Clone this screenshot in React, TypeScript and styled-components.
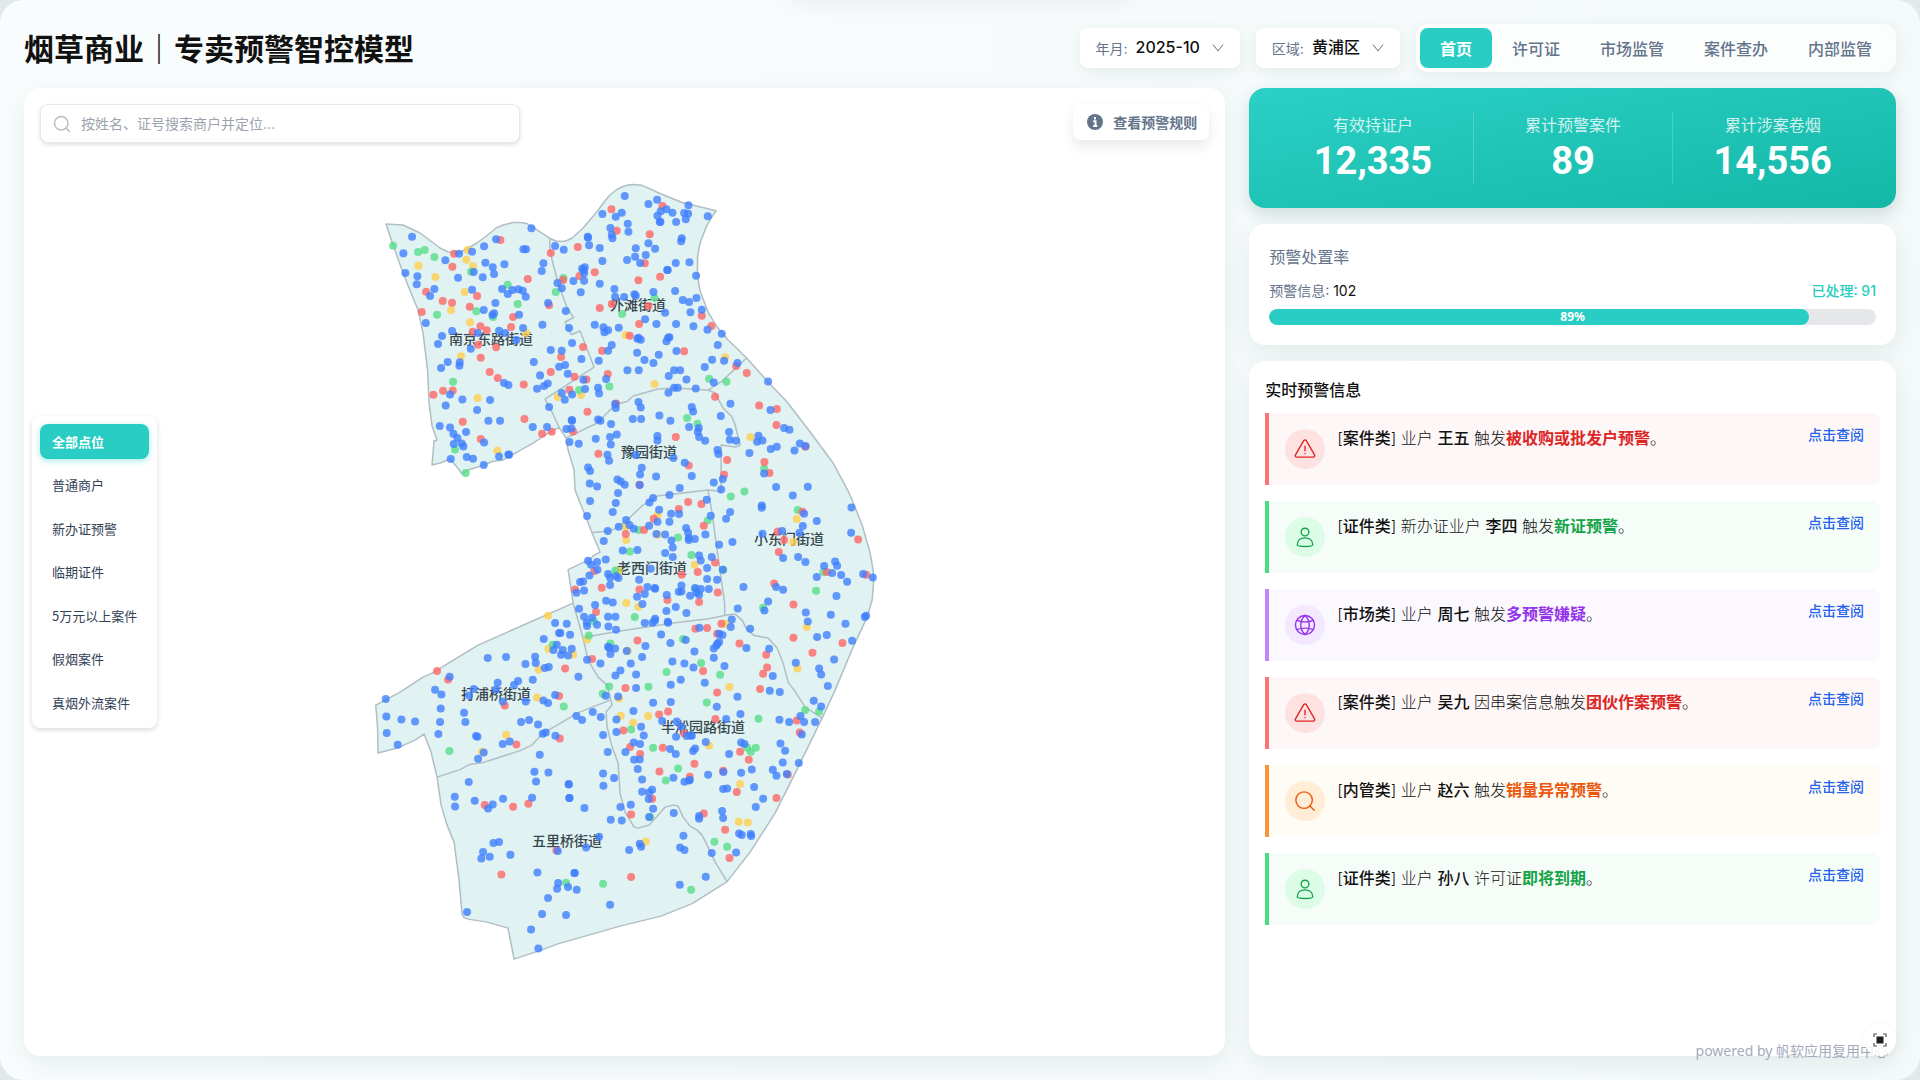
import React, { useState } from "react";
import styled, { createGlobalStyle } from "styled-components";

const GlobalStyle = createGlobalStyle`
  *, *::before, *::after { box-sizing: border-box; }
  body {
    margin: 0;
    background: #e0ebe9;
    color: #111111;
    font-family: Inter, "Noto Sans CJK SC", sans-serif;
    font-size: 14px;
  }
  h1, h2, p, ul, dl, dd, dt { margin: 0; padding: 0; }
  ul { list-style: none; }
  button, input, select { font-family: inherit; }
`;

const teal = "#29cdc3";
const slate = "#64748b";

/* ---------- page shell ---------- */

const Page = styled.div`
  position: relative;
  display: flex;
  flex-direction: column;
  gap: 16px;
  min-height: 100vh;
  padding: 24px;
  border-radius: 24px;
  overflow: hidden;
  background: linear-gradient(90deg, #f8fcfc, #f4f9f9);
`;

const TopDrawer = styled.div`
  position: absolute;
  top: -40px;
  left: 50%;
  width: 340px;
  height: 40px;
  transform: translateX(-50%);
  border-radius: 8px;
  box-shadow: 0 4px 20px rgba(0, 0, 0, 0.05);
`;

const Header = styled.header`
  display: flex;
  align-items: center;
  justify-content: space-between;
`;

const Title = styled.h1`
  padding-top: 2px;
  font-size: 30px;
  line-height: 46px;
  font-weight: 600;
`;

const HeaderTools = styled.div`
  display: flex;
  align-items: center;
  gap: 16px;
`;

const Picker = styled.label`
  display: flex;
  align-items: center;
  gap: 8px;
  height: 40px;
  padding: 0 16px;
  border-radius: 8px;
  background: #fff;
  color: ${slate};
  font-size: 14px;
  box-shadow: 0 4px 16px rgba(15, 60, 60, 0.07);
`;

const PickerSelect = styled.select`
  appearance: none;
  border: 0;
  padding: 0 4px 2px 0;
  background: none;
  color: #111;
  font-size: 16px;
  line-height: 24px;
  font-weight: 500;
  field-sizing: content;
`;

const Nav = styled.nav`
  display: flex;
  padding: 4px;
  border-radius: 12px;
  background: #fcfefe;
  box-shadow: 0 4px 16px rgba(15, 60, 60, 0.07);
`;

const NavButton = styled.button<{ $active: boolean }>`
  height: 40px;
  padding: 0 20px;
  border: 0;
  border-radius: 8px;
  background: ${(p) => (p.$active ? teal : "transparent")};
  color: ${(p) => (p.$active ? "#fff" : slate)};
  font-size: 16px;
  font-weight: ${(p) => (p.$active ? 600 : 500)};
  cursor: pointer;
`;

const Main = styled.main`
  flex: 1;
  display: grid;
  grid-template-columns: 13fr 7fr;
  gap: 24px;
  min-height: 0;
`;

const Card = styled.section`
  border-radius: 16px;
  background: #fff;
  box-shadow: 0 8px 24px rgba(15, 60, 60, 0.07);
`;

/* ---------- map ---------- */

const MapCard = styled(Card)`
  position: relative;
  display: flex;
`;

const MapSvg = styled.svg`
  flex: 1;
  width: 100%;
  min-width: 0;
`;

const MapLabel = styled.text`
  fill: #37474f;
  font-size: 14px;
  font-weight: 500;
  text-anchor: middle;
  dominant-baseline: central;
`;

const MapToolbar = styled.div`
  position: absolute;
  top: 16px;
  left: 16px;
  right: 16px;
  display: flex;
  align-items: flex-start;
  justify-content: space-between;
`;

const SearchBox = styled.label`
  display: flex;
  align-items: center;
  gap: 10px;
  width: 480px;
  height: 39px;
  padding: 0 12px;
  border: 1px solid #e5e7eb;
  border-radius: 8px;
  background: #fff;
  color: #b8bfca;
  box-shadow: 0 2px 4px rgba(0, 0, 0, 0.12);
`;

const SearchInput = styled.input`
  flex: 1;
  border: 0;
  padding: 0;
  outline: 0;
  background: none;
  font-size: 14px;
  color: #111;
  &::placeholder { color: #9ca3af; }
`;

const RulesButton = styled.button`
  display: flex;
  align-items: center;
  gap: 10px;
  height: 36px;
  padding: 0 12px 0 14px;
  border: 0;
  border-radius: 8px;
  background: #fff;
  color: ${slate};
  font-size: 14px;
  font-weight: 600;
  box-shadow: 0 6px 14px rgba(0, 0, 0, 0.09);
  cursor: pointer;
`;

const LegendHolder = styled.div`
  position: absolute;
  top: 0;
  bottom: 0;
  left: 8px;
  display: flex;
  align-items: center;
  pointer-events: none;
`;

const Legend = styled.ul`
  display: grid;
  gap: 8px;
  padding: 8px;
  border-radius: 8px;
  background: #fff;
  box-shadow: 0 2px 5px rgba(0, 0, 0, 0.15);
  pointer-events: auto;
`;

const LegendButton = styled.button<{ $active: boolean }>`
  display: block;
  width: 100%;
  padding: 8px 12px;
  border: 0;
  border-radius: 8px;
  background: ${(p) => (p.$active ? teal : "transparent")};
  color: ${(p) => (p.$active ? "#fff" : "#334155")};
  font-family: "Noto Sans CJK SC", sans-serif;
  font-size: 13px;
  line-height: 1.5;
  font-weight: ${(p) => (p.$active ? 600 : 400)};
  text-align: left;
  box-shadow: ${(p) => (p.$active ? "0 2px 6px rgba(41, 205, 195, 0.4)" : "none")};
  cursor: pointer;
`;

/* ---------- right column ---------- */

const Side = styled.div`
  display: flex;
  flex-direction: column;
  gap: 16px;
  min-width: 0;
`;

const StatsCard = styled.dl`
  display: grid;
  grid-template-columns: repeat(3, 1fr);
  padding: 24px;
  border-radius: 16px;
  background: linear-gradient(to bottom right, #2bd0c6, #14b8a6);
  color: #fff;
  text-align: center;
  box-shadow: 0 6px 16px rgba(15, 60, 60, 0.16);
`;

const Stat = styled.div`
  & + & { border-left: 1px solid rgba(255, 255, 255, 0.2); }
`;

const StatLabel = styled.dt`
  font-size: 16px;
  line-height: 26px;
  color: rgba(255, 255, 255, 0.8);
`;

const StatValue = styled.dd`
  font-family: Roboto, sans-serif;
  font-size: 38px;
  line-height: 46px;
  font-weight: 700;
`;

const RateCard = styled(Card)`
  padding: 20px;
`;

const RateTitle = styled.h2`
  color: ${slate};
  font-size: 16px;
  line-height: 26px;
  font-weight: 400;
`;

const RateRow = styled.div`
  display: flex;
  justify-content: space-between;
  padding: 10px 0 8px;
  color: ${slate};
  font-size: 14px;
  line-height: 21px;
`;

const RateCount = styled.span`
  color: #111;
`;

const RateDone = styled.span`
  color: ${teal};
  font-weight: 500;
`;

const Progress = styled.div`
  display: grid;
  height: 16px;
  border-radius: 8px;
  overflow: hidden;
  background: #e5e7eb;
`;

const ProgressFill = styled.div`
  grid-area: 1 / 1;
  border-radius: 8px;
  background: ${teal};
`;

const ProgressText = styled.span`
  grid-area: 1 / 1;
  color: #fff;
  font-family: "Noto Sans", sans-serif;
  font-size: 12px;
  line-height: 16px;
  font-weight: 700;
  text-align: center;
`;

const AlertCard = styled(Card)`
  flex: 1;
  padding: 16px;
`;

const AlertTitle = styled.h2`
  padding-bottom: 10px;
  font-size: 16px;
  line-height: 26px;
  font-weight: 500;
`;

const AlertList = styled.ul`
  display: grid;
  gap: 16px;
`;

type Tone = { line: string; bg: string; disc: string; ink: string };

const AlertItem = styled.li<{ $tone: Tone }>`
  display: flex;
  align-items: flex-start;
  gap: 12px;
  min-height: 72px;
  padding: 12px 16px;
  border-left: 4px solid ${(p) => p.$tone.line};
  border-radius: 0 8px 8px 0;
  background: ${(p) => p.$tone.bg};
`;

const Disc = styled.span<{ $tone: Tone }>`
  display: grid;
  place-items: center;
  width: 40px;
  height: 40px;
  margin-top: 4px;
  border-radius: 50%;
  background: ${(p) => p.$tone.disc};
  color: ${(p) => p.$tone.ink};
`;

const AlertText = styled.p`
  flex: 1;
  color: #111;
  font-size: 16px;
  line-height: 26px;
  font-weight: 300;
`;

const Strong = styled.strong`
  color: #111;
  font-weight: 500;
`;

const Highlight = styled.b<{ $tone: Tone }>`
  color: ${(p) => p.$tone.ink};
  font-weight: 600;
`;

const AlertLink = styled.a`
  color: #2563eb;
  font-size: 14px;
  line-height: 20px;
  font-weight: 500;
  text-decoration: none;
`;

const Powered = styled.p`
  position: absolute;
  right: 32px;
  bottom: 18px;
  color: #a3abba;
  font-family: "Noto Sans", "Noto Sans CJK SC", sans-serif;
  font-size: 14px;
  line-height: 22px;
`;

const FullscreenButton = styled.button`
  position: absolute;
  right: 24px;
  bottom: 24px;
  display: grid;
  place-items: center;
  width: 32px;
  height: 32px;
  padding: 0;
  border: 0;
  border-radius: 50%;
  background: rgba(255, 255, 255, 0.85);
  box-shadow: 0 2px 8px rgba(0, 0, 0, 0.06);
  cursor: pointer;
`;

/* ---------- icons ---------- */

const Stroke = ({ size = 22, width = 1.5, children }: { size?: number; width?: number; children: React.ReactNode }) => (
  <svg width={size} height={size} viewBox="0 0 24 24" fill="none" stroke="currentColor" strokeWidth={width} strokeLinecap="round" strokeLinejoin="round" aria-hidden="true">
    {children}
  </svg>
);

const SearchIcon = ({ size = 22, width = 1.5 }: { size?: number; width?: number }) => (
  <Stroke size={size} width={width}>
    <circle cx="11" cy="11" r="9" />
    <path d="M17.2 17.2 22 22" />
  </Stroke>
);

const WarnIcon = () => (
  <Stroke>
    <path d="M10.6 2.9a1.6 1.6 0 0 1 2.8 0l9 15.6a1.6 1.6 0 0 1-1.4 2.4H3a1.6 1.6 0 0 1-1.4-2.4z" />
    <path d="M12 9v5M12 17v.3" />
  </Stroke>
);

const UserIcon = () => (
  <Stroke>
    <circle cx="12" cy="6.6" r="4.2" />
    <path d="M3.6 20.5c0-5 3.700-7.500 8.400-7.500s8.400 2.500 8.400 7.500c0 1.200-2.700 1.800-8.400 1.800s-8.400-.6-8.400-1.800z" />
  </Stroke>
);

const GlobeIcon = () => (
  <Stroke>
    <circle cx="12" cy="12" r="10.400" />
    <path d="M12 1.600C5.800 7 5.800 17 12 22.400M12 1.600c6.200 5.400 6.200 15.400 0 20.800M3.200 7c5 2.200 12.600 2.200 17.600 0M3.200 17c5-2.200 12.600-2.200 17.600 0" />
  </Stroke>
);

const ChevronIcon = () => (
  <svg width="12" height="12" viewBox="0 0 12 12" fill="none" stroke="#64748b" aria-hidden="true">
    <path d="M1 2.500 6 9l5-6.500" />
  </svg>
);

const InfoIcon = () => (
  <svg width="16" height="16" viewBox="0 0 16 16" aria-hidden="true">
    <circle cx="8" cy="8" r="8" fill="#64748b" />
    <path d="M8 3v2.400M6.200 7.200H8.500v4.600M6.200 12h4" stroke="#fff" strokeWidth="2" fill="none" />
  </svg>
);

const FullscreenIcon = () => (
  <svg width="14" height="14" viewBox="0 0 14 14" fill="none" aria-hidden="true">
    <rect x="3.500" y="3.500" width="7" height="7" fill="#1f1f1f" />
    <path d="M1 4V1h3M10 1h3v3M13 10v3h-3M4 13H1v-3" stroke="#555" strokeWidth="1.200" />
  </svg>
);

/* ---------- map data ---------- */

const outline =
  "M386 224L403 225 420 233 440 248 448 252 460 252.500 468 248 477 243 490 233 496 228 503 225 513 222.500 520 222.500 527 223.500 542 233 550 238.500 556 241 562 241.500 567 240.500 572 238 583 228 597 211.500 604 202 610 195 616 190 623 186.500 628 185 633 184.500 642 185.300 660 193.500 682 202.500 716 210.700 711 218 706 227 700 243 697.500 256 697.300 275 700 291 708 312 717 327 728 340 746.500 358 768 382 787 402 810 432 833 463 847.500 490 852 500 862 525 870 553 873 570 873.500 582 872 600 867 617 853 647 835 690 822 718 800 763 775 813 750 852 727 881.500 692 903.500 661 916 620 926 557 944 541 950 514 959 508 928 487 922 468 919 464 917.500 462 914 459 880 454 842 447 825 441 805 437 777 431 752 424 734 415 740 397 748 378 753 377.500 727 375.700 705 400 692 423 677 432 673 478 645 573 603 570.700 587 568 569.500 590 559 594 555 600 552 592 533 583 510 580 503 575 490 574 470 568 450 566 438 559 427.500 548 433 533 443 510 456 503 460 492 461.500 483 465.500 471 469 466 471 462 474 457 467 450 459 440 463 432 465 434 441 437 440 432 426 429 403 427.500 370 423 333 418 310 413 298 403 273 392 242Z";

const inner = [
  "M550 239L549.500 246 552 260 558 283 563 297 567 308 573.500 317.500 565 322 571 334.500 580 331 594 367 545 399 552 412 559 427.500",
  "M566 438L597 423 608 412 615 404.500 627 401.500 633 396 640 394 658 389 672 388 708 390 722 381 746.500 358",
  "M708 390L715 393 723 408 732 417 735 425 738 437 740 444 739 446 735 447 721 445 721 487 720.500 491.500 708 490 657 496 643 505 627 520 618 527 610 531 592 532.500",
  "M708 490L712 513 717 550 724.500 603 724.500 615",
  "M583 637.500L620 631 673 623 707 619 727 615 735 614 742 620 746 628 754 635.500 768 638 777 648 783 663 788 682 794 690 805 707 822 718",
  "M573 603L583 638 588 660 598 677 607 685 610 697 612 705 606 712 607 727 612 747 618 763 620 793 625 812 634 827 638 828 649 825 660 813 665 807 673 805 678 806 683 817 690 826 697 830 702 835 707 845 715 862 727 881.500",
  "M437 777L460 769.500 469 764.500 483 762.500 520 750.500 532 745 543 733 563 721.500 577 713 610 700",
];

/* Each survey sheet stores its points in thirds of a map unit from the sheet's corner. */
type Sheet = { origin: [number, number]; blue: string; red: string; green: string; yellow: string };

const sheets: Sheet[] = [
  {
    origin: [360, 170],
    blue: "156,200 130,250 136,309 172,319 170,343 256,271 297,251 336,245 372,229 408,208 514,175 490,238 498,238 376,278 398,292 402,312 433,283 341,306 368,322 294,323 336,359 223,357 210,378 426,357 443,372 457,360 475,358 488,362 497,380 406,399 371,420 402,430 397,435 477,434 489,474 417,482 435,489 353,489 276,483 246,498 234,522 197,459 332,536 469,510 263,576 243,594 299,577 298,587 432,639 445,645 521,576 540,616 563,640 552,648 531,656 547,464 564,399 550,280 545,303 585,228 611,239 592,339 605,355 617,423 627,474 636,519 572,540 605,542 597,590 615,585 623,611 664,567 605,669 614,689 636,673 670,629 675,657 567,711 561,771 518,771 385,752 420,752 390,690 351,720 307,688 270,673 257,706 239,768 270,772 280,791 292,804 281,822 305,820 310,829 318,786 372,817 272,867 320,861 339,866 371,885 417,859 445,853 447,854 640,333 662,367 672,332 672,310 674,292 666,296 671,301 683,200 684,203 687,226 719,234 727,273 719,341 727,132 794,78 785,128 767,140 751,174 755,194 757,205 803,161 805,185 827,235 825,260 801,270 763,357 765,380 792,381 823,373 704,464 730,472 733,487 744,481 776,473 755,525 744,542 716,572 802,601 738,627 714,653 717,670 765,702 767,714 714,748 721,752 753,762 818,747 770,793 750,801 752,823 707,806 656,821 628,816 635,750 636,752 634,775 619,777 742,854 747,872 684,892 827,377 832,506 831,548 836,601 835,696 827,855",
    red: "421,210 282,251 277,290 198,365 351,378 248,393 276,398 329,410 185,426 503,327 459,441 453,471 361,469 380,481 338,485 354,524 408,532 362,563 389,606 413,624 491,643 249,662 278,661 220,674 308,755 493,747 362,807 546,791 575,785 572,249 567,406 609,330 653,231 658,318 704,307 719,414 755,402 754,118 770,182 669,531 603,561 572,606 643,620 679,628 628,659 726,542 743,612 682,725 639,784 715,851 809,497 768,700",
    green: "99,227 174,246 194,240 223,261 333,305 231,434 349,424 399,441 443,344 473,402 279,635 285,838 317,909 610,324 587,366 657,660 748,649 786,432",
    yellow: "175,287 226,321 323,240 319,269 339,289 314,366 273,420 330,457 498,489 303,559 353,684 412,842 593,681 663,675 797,495",
  },
  {
    origin: [600, 170],
    blue: "145,102 171,89 199,118 217,128 182,124 172,137 179,155 181,156 228,156 252,129 264,131 265,106 257,148 323,139 145,220 165,236 245,205 243,214 137,255 120,279 227,279 268,277 203,300 201,300 288,317 160,366 225,363 195,428 135,448 169,462 228,462 248,390 267,396 289,384 271,427 305,419 280,469 322,479 365,491 353,525 204,503 208,502 199,514 122,509 115,503 176,554 133,570 160,579 229,543 336,569 372,572 412,579 314,591 222,601 240,601 206,618 259,628 222,653 233,653 205,668 287,655 341,637 504,634 391,701 362,738 275,711 279,724 178,736 211,752 122,712 123,747 172,798 172,811 267,771 296,774 293,785 297,801 315,812 387,786 389,809 408,812 511,720 552,774 568,779 475,797 471,815 487,811 512,837 530,830 599,820 616,828 583,841 448,849 352,840 355,852 220,864 254,878 125,893",
    red: "187,108 149,193 134,280 180,320 145,408 305,437 334,468 252,544 408,588 440,609 345,680 477,706 530,717 529,765 616,830 227,801 381,870 266,886 493,876 117,462 115,331",
    green: "163,383 327,626 379,635 261,744 292,761 492,895",
    yellow: "163,642 375,562 451,801",
  },
  {
    origin: [560, 470],
    blue: "90,3 89,40 111,49 172,28 182,34 194,44 240,13 288,19 239,45 174,69 90,93 167,99 158,126 81,138 395,18 359,54 328,75 279,84 268,97 297,119 333,131 357,132 328,155 292,155 267,167 198,150 208,165 221,176 176,170 143,183 131,213 188,241 232,240 289,192 315,193 334,211 338,232 315,249 338,261 378,174 384,188 386,204 404,207 386,210 436,193 452,137 440,89 461,37 488,27 483,58 612,10 648,51 743,50 698,76 605,106 605,113 510,126 498,146 517,216 477,224 607,191 666,183 718,188 728,168 732,131 770,153 874,112 873,188 669,264 714,261 736,276 792,288 825,274 831,287 816,309 843,315 770,321 861,335 909,312 938,322 829,378 812,434 914,441 918,437 856,461 876,512 822,568 800,495 771,501 743,454 737,427 777,595 783,613 803,648 707,578 648,351 669,359 624,394 613,421 550,351 533,415 488,299 455,261 441,294 441,327 471,329 417,256 422,271 272,296 237,329 262,351 284,354 285,356 254,372 231,380 247,402 320,375 319,423 347,411 364,346 364,364 356,365 390,377 405,354 410,368 422,357 417,374 446,357 379,429 323,455 324,458 285,446 284,452 277,458 254,459 166,440 144,440 145,469 168,479 138,392 158,397 105,405 96,443 111,464 72,440 80,458 81,468 57,416 49,368 72,361 60,336 69,334 88,316 111,276 84,272 137,268 144,312 150,323 168,318 175,324 150,345 112,299 93,284 20,461 30,494 1,489 35,536 8,540 3,554 24,556 81,569 55,620 144,530 147,533 165,535 151,552 121,580 166,616 181,601 212,580 228,613 256,528 246,561 200,543 303,493 331,519 377,510 403,544 337,574 373,580 400,592 362,629 434,638 461,563 493,588 461,535 469,526 472,521 477,516 487,495 477,491 418,473 512,471 515,448 570,476 559,534 627,536 638,618",
    red: "492,14 628,9 384,96 424,102 356,117 281,146 431,167 252,180 197,192 238,44 727,125 653,184 672,210 656,246 894,208 465,277 413,306 365,314 473,367 417,396 322,390 238,358 125,353 103,303 45,358 108,426 232,511 96,567 15,595 406,476 441,474 484,461 471,491 538,520 618,554 621,592 609,611 429,603 700,403 642,340 700,503 757,548 847,519 800,306 918,314 196,654 600,657",
    green: "553,64 512,79 713,120 443,151 354,202 236,180 209,244 394,255 166,301 489,299 405,356 224,441 102,454 86,496 151,520 369,507 423,579 319,606 480,614 768,362 790,306 609,413 147,649 265,650",
    yellow: "710,147 699,216 293,135 197,170 198,210 293,194 404,284 199,399 235,410 176,303 496,461 740,471 712,595 39,553 81,508 203,542 508,651",
  },
  {
    origin: [560, 680],
    blue: "228,24 332,14 174,49 137,47 279,68 332,66 220,93 169,118 98,96 49,108 66,120 122,111 306,123 350,124 363,139 243,140 251,166 129,165 169,156 221,187 240,192 196,216 143,216 222,239 239,238 233,267 246,298 129,280 162,294 130,317 26,313 28,354 246,335 276,329 267,337 266,357 279,386 212,374 181,381 73,384 152,419 185,421 267,411 341,399 348,170 380,168 392,166 395,167 330,207 347,222 405,205 399,213 437,186 340,293 373,305 387,301 389,300 444,284 490,276 470,80 532,50 541,102 498,117 543,187 553,192 507,222 575,268 543,278 489,327 501,325 582,321 609,356 587,381 486,393 489,414 417,408 417,416 370,467 360,502 373,510 455,519 528,517 537,460 545,465 572,462 573,468 437,590 359,614 239,491 243,500 207,510 117,470 78,502 43,579 24,621 50,629 629,32 659,36 761,62 783,79 721,108 732,126 765,126 687,126 658,119 725,163 661,190 675,212 668,247 716,249 638,269 649,287 680,282",
    red: "471,37 297,103 324,94 466,117 190,151 210,201 308,203 240,222 372,160 403,251 298,274 389,290 276,356 213,403 540,215 566,239 489,272 530,336 649,354 683,283 719,157 710,121 431,400 495,449 508,534 213,591",
    green: "128,41 11,79 440,67 213,148 279,203 354,265 317,301 595,116 561,202 572,215 587,203 735,90 777,94 463,485 501,500 270,411 129,611 393,629 18,608",
    yellow: "177,55 182,107 264,108 219,128 447,196 540,312 536,425 563,427 257,485",
  },
  {
    origin: [360, 600],
    blue: "585,69 597,99 551,117 590,134 580,150 383,174 438,171 525,170 527,189 496,192 554,204 566,201 518,239 474,243 462,255 413,248 407,268 341,267 327,286 269,230 225,269 244,283 77,297 79,349 80,399 124,358 165,364 113,434 242,325 240,366 235,402 312,338 316,366 348,408 352,410 428,304 497,304 550,301 564,309 585,285 483,366 507,360 534,373 548,401 557,397 586,407 428,432 449,424 371,457 354,476 326,546 284,590 285,619 344,602 384,625 398,613 429,596 516,593 539,464 523,515 565,517 528,544 626,552 628,594 400,729 417,726 369,756 364,775 389,770 451,764 532,817 594,849 591,866 564,894 546,942 618,945 513,988 535,1045 321,936 593,753 644,819 750,914",
    red: "231,213 264,238 434,316 469,433 374,615 459,620 505,611 424,823 597,288 599,415 589,751",
    green: "578,134 268,453",
    yellow: "564,47 565,147 536,208 531,292 438,404 366,455",
  },
];

const dotColors = { yellow: "#ffce4d", green: "#58dd8b", red: "#ff6666", blue: "#4080ff" } as const;

const districts = [
  { name: "南京东路街道", x: 491, y: 338 },
  { name: "外滩街道", x: 638, y: 304 },
  { name: "豫园街道", x: 649, y: 451 },
  { name: "小东门街道", x: 789, y: 538 },
  { name: "老西门街道", x: 652, y: 567 },
  { name: "半淞园路街道", x: 703, y: 726 },
  { name: "打浦桥街道", x: 496, y: 693 },
  { name: "五里桥街道", x: 567, y: 840 },
];

const DistrictMap = () => (
  <MapSvg viewBox="24 88 1201 968" role="img" aria-label="黄浦区商户点位图">
    <path d={outline} fill="#e0f2f1" stroke="#b0bec5" strokeWidth="1.500" strokeLinejoin="round" />
    {inner.map((d) => (
      <path key={d} d={d} fill="none" stroke="#b0bec5" strokeWidth="1.500" strokeLinejoin="round" />
    ))}
    {districts.map((d) => (
      <MapLabel key={d.name} x={d.x} y={d.y}>{d.name}</MapLabel>
    ))}
    {(Object.keys(dotColors) as (keyof typeof dotColors)[]).map((kind) => (
      <g key={kind} fill={dotColors[kind]} fillOpacity="0.8">
        {sheets.flatMap((sheet, s) =>
          sheet[kind].split(" ").map((pair, i) => {
            const [x, y] = pair.split(",").map(Number);
            return <circle key={`${s}-${i}`} cx={sheet.origin[0] + x / 3} cy={sheet.origin[1] + y / 3} r="4" />;
          })
        )}
      </g>
    ))}
  </MapSvg>
);

/* ---------- page data ---------- */

const navItems = ["首页", "许可证", "市场监管", "案件查办", "内部监管"];
const legendItems = ["全部点位", "普通商户", "新办证预警", "临期证件", "5万元以上案件", "假烟案件", "真烟外流案件"];
const stats = [
  ["有效持证户", "12,335"],
  ["累计预警案件", "89"],
  ["累计涉案卷烟", "14,556"],
];

const red: Tone = { line: "#ff7272", bg: "#fef7f7", disc: "#fee2e2", ink: "#dc2626" };
const green: Tone = { line: "#4ade80", bg: "#f6fdf9", disc: "#dcfce7", ink: "#16a34a" };
const purple: Tone = { line: "#c084fc", bg: "#fbf9ff", disc: "#f3e8ff", ink: "#9333ea" };
const orange: Tone = { line: "#fb923c", bg: "#fffbf5", disc: "#ffedd5", ink: "#ea580c" };

const alerts = [
  { tone: red, icon: <WarnIcon />, kind: "案件类", who: "业户", name: "王五", verb: "触发", what: "被收购或批发户预警" },
  { tone: green, icon: <UserIcon />, kind: "证件类", who: "新办证业户", name: "李四", verb: "触发", what: "新证预警" },
  { tone: purple, icon: <GlobeIcon />, kind: "市场类", who: "业户", name: "周七", verb: "触发", what: "多预警嫌疑" },
  { tone: red, icon: <WarnIcon />, kind: "案件类", who: "业户", name: "吴九", verb: "因串案信息触发", what: "团伙作案预警" },
  { tone: orange, icon: <SearchIcon />, kind: "内管类", who: "业户", name: "赵六", verb: "触发", what: "销量异常预警" },
  { tone: green, icon: <UserIcon />, kind: "证件类", who: "业户", name: "孙八", verb: "许可证", what: "即将到期" },
];

export default function App() {
  const [tab, setTab] = useState(navItems[0]);
  const [layer, setLayer] = useState(legendItems[0]);
  const rate = Math.round((91 / 102) * 100);

  return (
    <>
      <GlobalStyle />
      <Page>
        <TopDrawer />
        <Header>
          <Title>烟草商业｜专卖预警智控模型</Title>
          <HeaderTools>
            <Picker>
              年月:
              <PickerSelect defaultValue="2025-10">
                <option>2025-10</option>
              </PickerSelect>
              <ChevronIcon />
            </Picker>
            <Picker>
              区域:
              <PickerSelect defaultValue="黄浦区">
                <option>黄浦区</option>
              </PickerSelect>
              <ChevronIcon />
            </Picker>
            <Nav>
              {navItems.map((item) => (
                <NavButton key={item} type="button" $active={item === tab} onClick={() => setTab(item)}>
                  {item}
                </NavButton>
              ))}
            </Nav>
          </HeaderTools>
        </Header>

        <Main>
          <MapCard>
            <DistrictMap />
            <MapToolbar>
              <SearchBox>
                <SearchIcon size={18} width={2} />
                <SearchInput aria-label="搜索商户" placeholder="按姓名、证号搜索商户并定位..." />
              </SearchBox>
              <RulesButton type="button">
                <InfoIcon />
                查看预警规则
              </RulesButton>
            </MapToolbar>
            <LegendHolder>
              <Legend>
                {legendItems.map((item) => (
                  <li key={item}>
                    <LegendButton type="button" $active={item === layer} onClick={() => setLayer(item)}>
                      {item}
                    </LegendButton>
                  </li>
                ))}
              </Legend>
            </LegendHolder>
          </MapCard>

          <Side>
            <StatsCard>
              {stats.map(([label, value]) => (
                <Stat key={label}>
                  <StatLabel>{label}</StatLabel>
                  <StatValue>{value}</StatValue>
                </Stat>
              ))}
            </StatsCard>

            <RateCard>
              <RateTitle>预警处置率</RateTitle>
              <RateRow>
                <span>预警信息: <RateCount>102</RateCount></span>
                <RateDone>已处理: 91</RateDone>
              </RateRow>
              <Progress role="progressbar" aria-valuenow={rate} aria-label="预警处置率">
                <ProgressFill style={{ width: `${rate}%` }} />
                <ProgressText>{rate}%</ProgressText>
              </Progress>
            </RateCard>

            <AlertCard>
              <AlertTitle>实时预警信息</AlertTitle>
              <AlertList>
                {alerts.map((a) => (
                  <AlertItem key={a.name} $tone={a.tone}>
                    <Disc $tone={a.tone}>{a.icon}</Disc>
                    <AlertText>
                      [<Strong>{a.kind}</Strong>] {a.who} <Strong>{a.name}</Strong> {a.verb}
                      <Highlight $tone={a.tone}>{a.what}</Highlight>。
                    </AlertText>
                    <AlertLink href="#">点击查阅</AlertLink>
                  </AlertItem>
                ))}
              </AlertList>
            </AlertCard>
          </Side>
        </Main>

        <Powered>powered by 帆软应用复用中心</Powered>
        <FullscreenButton type="button" aria-label="全屏">
          <FullscreenIcon />
        </FullscreenButton>
      </Page>
    </>
  );
}
